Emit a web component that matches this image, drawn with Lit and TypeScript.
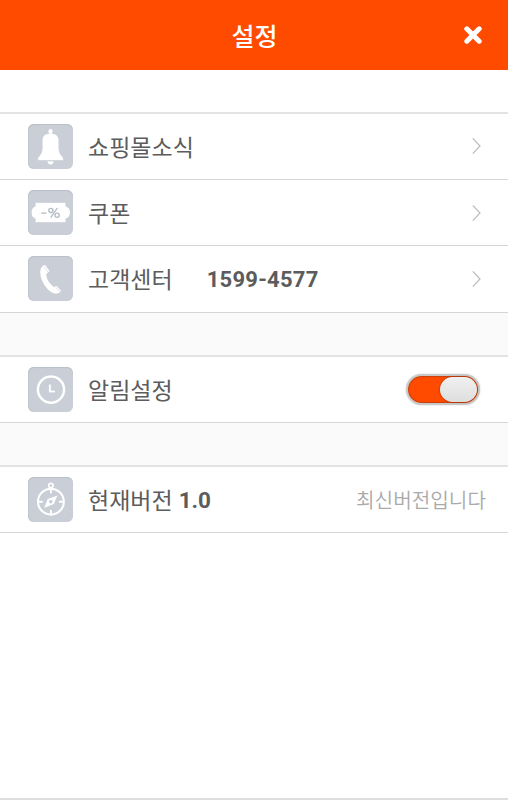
import { LitElement, html, svg, css, type SVGTemplateResult } from "lit";
import { customElement, property } from "lit/decorators.js";

const icons: Record<string, SVGTemplateResult> = {
  bell: svg`
    <circle cx="22.5" cy="7.2" r="2.2"/>
    <path d="M21.3 8h2.4v3h-2.4z"/>
    <path d="M22.5 9.6C17.2 9.8 14.6 12 14.5 16.5V24.5C14.3 28.6 12.9 31 10.3 33.4Q9.2 36.2 11.2 36.2H33.9Q35.9 36.2 34.8 33.4C32.2 31 30.8 28.6 30.6 24.5V16.5C30.5 12 27.8 9.8 22.5 9.6Z"/>
    <path d="M19.4 37.2H25.7Q25.4 40.6 22.5 40.6Q19.8 40.6 19.4 37.2Z"/>`,
  coupon: svg`
    <path d="M7.5 12.7H37.5V16.3Q42 17.8 42 22.5T37.5 28.8V32.3H7.5V28.8Q3.5 27.2 3.5 22.5T7.5 16.3Z"/>
    <g fill="none" stroke="#b2bac4" stroke-width="1.3">
      <path d="M13.2 23.2h5.2M29.3 18L22.7 27.7"/>
      <circle cx="22.9" cy="20.5" r="2.1"/><circle cx="29.1" cy="25.3" r="2.1"/>
    </g>`,
  phone: svg`
    <path d="M14.8 10.1Q16 8.6 17.5 9.2L21.6 15.1L18.3 18.3Q18.5 25 25.6 31.1L28.4 29.7L32.9 34.6Q32.4 37.6 28.2 37.7C20.5 37.2 12.2 25.5 12.2 16.2Q12.2 12 14.8 10.1Z"/>
    <path d="M16.3 10.8L20.2 16.5M27.2 30.4L31.3 35.4" fill="none" stroke="#cbd0d7" stroke-width=".6"/>`,
  clock: svg`
    <g fill="none" stroke="#fff">
      <circle cx="23" cy="22.6" r="13.1" stroke-width="2.6"/>
      <path d="M21.9 17.4V24.4H27" stroke-width="2"/>
    </g>`,
  compass: svg`
    <g fill="none" stroke="#fff">
      <circle cx="22.9" cy="24.7" r="12.9" stroke-width="2.2"/>
      <circle cx="22.9" cy="8.5" r="2.2" stroke-width="1.7"/>
      <path d="M22.9 11.6V16.5M22.9 33V37M10 24.7H14.8M31 24.7H35.7" stroke-width="1.9"/>
    </g>
    <path fill-rule="evenodd" d="M29.4 18.5L25.9 27.1L16.2 30.9L19.6 22.1ZM22.8 22.9a1.7 1.7 0 1 0 .01 0Z"/>`,
};

@customElement("tile-icon")
class TileIcon extends LitElement {
  @property() name = "bell";
  static styles = css`
    :host { display: block; width: 45px; height: 45px; flex: none; border-radius: 6px; background: #cacfd7; box-shadow: inset 0 1px 1px #bac0c9, inset 1px 0 1px #c2c7cf; }
    svg { display: block; fill: #fff; filter: drop-shadow(.6px .7px .5px #b6bdc7); }
  `;
  render() {
    return html`<svg width="45" height="45" viewBox="0 0 45 45">${icons[this.name]}</svg>`;
  }
}

@customElement("setting-row")
class SettingRow extends LitElement {
  @property() icon = "bell";
  @property() label = "";
  static styles = css`
    :host { display: flex; align-items: center; box-sizing: border-box; flex: none; height: 65px; padding: 0 0 0 28px; background: #fff; }
    .label { margin-left: 15px; padding-top: 5px; font-size: 23px; line-height: 34px; white-space: pre; }
    .end { margin-left: auto; display: flex; align-items: center; }
  `;
  render() {
    return html`<tile-icon name=${this.icon}></tile-icon><span class="label">${this.label}</span><slot></slot><div class="end"><slot name="end"></slot></div>`;
  }
}

@customElement("app-root")
class AppRoot extends LitElement {
  static styles = css`
    :host { display: block; width: 509px; height: 800px; overflow: hidden; background: #fff; color: #5c5c5c; font-family: Roboto, "Noto Sans CJK KR", sans-serif; }
    .screen { width: 508px; height: 800px; display: flex; flex-direction: column; }
    header { height: 70px; flex: none; display: grid; grid-template-columns: 80px 1fr 80px; align-items: center; background: #ff4b00; color: #fff; }
    h1 { grid-column: 2; margin: 0; padding: 6px 0 0 1px; font-size: 25px; font-weight: 500; line-height: 36px; text-align: center; }
    .close { justify-self: end; margin-right: 26px; display: block; }
    .space { height: 42px; flex: none; }
    .line { height: 1px; flex: none; background: #d6d6d6; }
    .line.soft { height: 2px; background: #e3e3e3; }
    .line.soft + setting-row { padding-bottom: 1px; }
    setting-row.tall { height: 66px; padding-bottom: 1px; }
    .gap { height: 42px; flex: none; background: #fafafa; }
    .chev { display: block; margin-right: 26px; }
    b { font-size: 22.5px; font-weight: 700; line-height: 34px; }
    .tel { margin-left: 34px; padding-top: 3px; font-size: 22px; letter-spacing: .25px; }
    .ver { margin-left: 6px; padding-top: 2px; }
    .latest { margin-right: 22px; padding-top: 4px; color: #aaa; font-size: 20.2px; font-weight: 350; line-height: 30px; }
    .switch { box-sizing: border-box; width: 74px; height: 31px; margin-right: 28px; padding: 1px; border: 2px solid #c9c9c9; border-radius: 16px; background: #ff4b00; box-shadow: inset 0 0 1px 1px #c6400c, 0 0 2px #ccc; display: flex; justify-content: flex-end; }
    .knob { width: 37px; height: 25px; border-radius: 12.5px; background: linear-gradient(#f0f0f0, #dedede); box-shadow: 0 0 2px #762b0d; }
    .bottom { margin-top: auto; height: 2px; background: #dedede; }
  `;
  private chevron() {
    return html`<svg slot="end" class="chev" width="12" height="20" viewBox="0 0 12 20" fill="none" stroke="#bbb" stroke-width="1.2"><path d="M2.8 2.3L10 10L2.8 17.7"/></svg>`;
  }
  render() {
    return html`
      <div class="screen">
        <header>
          <h1>설정</h1>
          <svg class="close" width="18" height="18" viewBox="0 0 18 18" stroke="#fff" stroke-width="5" stroke-linecap="round"><path d="M2.8 2.8L15.2 15.2M15.2 2.8L2.8 15.2"/></svg>
        </header>
        <div class="space"></div>
        <div class="line soft"></div>
        <setting-row icon="bell" label="쇼핑몰소식">${this.chevron()}</setting-row>
        <div class="line"></div>
        <setting-row icon="coupon" label="쿠폰">${this.chevron()}</setting-row>
        <div class="line"></div>
        <setting-row class="tall" icon="phone" label="고객센터"><b class="tel">1599-4577</b>${this.chevron()}</setting-row>
        <div class="line"></div>
        <div class="gap"></div>
        <div class="line soft"></div>
        <setting-row icon="clock" label="알림설정"><div slot="end" class="switch"><div class="knob"></div></div></setting-row>
        <div class="line"></div>
        <div class="gap"></div>
        <div class="line soft"></div>
        <setting-row icon="compass" label="현재버전"><b class="ver">1.0</b><span slot="end" class="latest">최신버전입니다</span></setting-row>
        <div class="line"></div>
        <div class="bottom"></div>
      </div>`;
  }
}
